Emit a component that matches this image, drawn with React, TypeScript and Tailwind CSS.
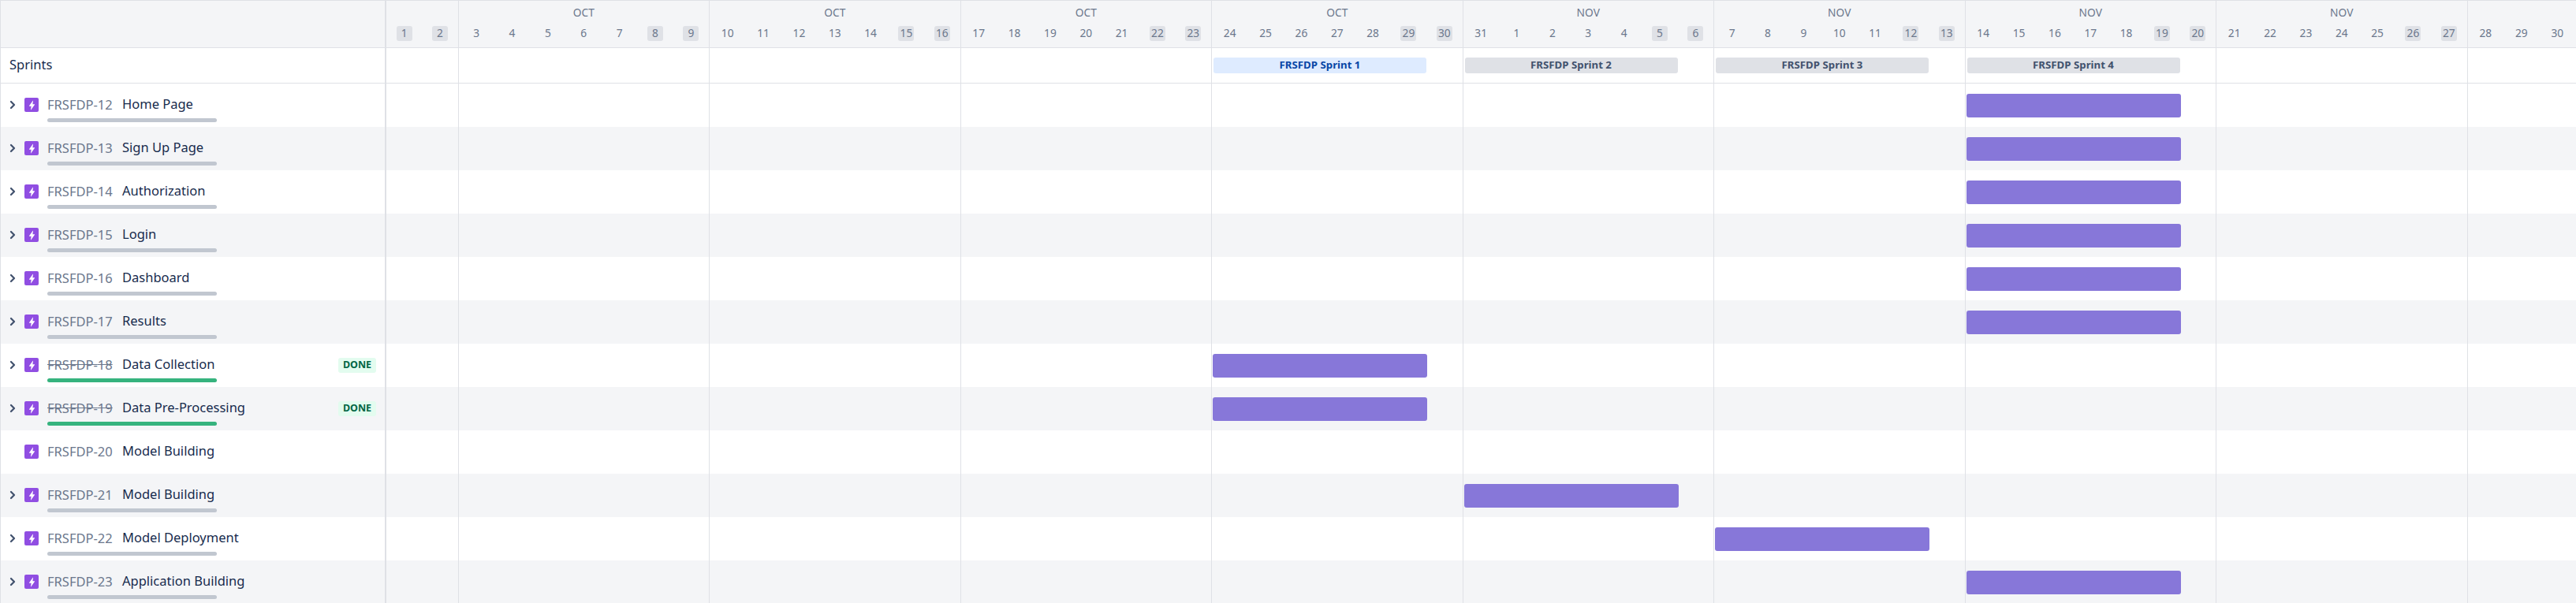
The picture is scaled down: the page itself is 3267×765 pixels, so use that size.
import React from 'react';
import { ChevronRight } from 'lucide-react';

type Week = { month?: string; days: number[] };

const weeks: Week[] = [
  { days: [1, 2] },
  { month: 'OCT', days: [3, 4, 5, 6, 7, 8, 9] },
  { month: 'OCT', days: [10, 11, 12, 13, 14, 15, 16] },
  { month: 'OCT', days: [17, 18, 19, 20, 21, 22, 23] },
  { month: 'OCT', days: [24, 25, 26, 27, 28, 29, 30] },
  { month: 'NOV', days: [31, 1, 2, 3, 4, 5, 6] },
  { month: 'NOV', days: [7, 8, 9, 10, 11, 12, 13] },
  { month: 'NOV', days: [14, 15, 16, 17, 18, 19, 20] },
  { month: 'NOV', days: [21, 22, 23, 24, 25, 26, 27] },
  { days: [28, 29, 30] },
];

type Issue = { id: number; title: string; week: number | null; done?: boolean; leaf?: boolean };

const issues: Issue[] = [
  { id: 12, title: 'Home Page', week: 7 },
  { id: 13, title: 'Sign Up Page', week: 7 },
  { id: 14, title: 'Authorization', week: 7 },
  { id: 15, title: 'Login', week: 7 },
  { id: 16, title: 'Dashboard', week: 7 },
  { id: 17, title: 'Results', week: 7 },
  { id: 18, title: 'Data Collection', week: 4, done: true },
  { id: 19, title: 'Data Pre-Processing', week: 4, done: true },
  { id: 20, title: 'Model Building', week: null, leaf: true },
  { id: 21, title: 'Model Building', week: 5 },
  { id: 22, title: 'Model Deployment', week: 6 },
  { id: 23, title: 'Application Building', week: 7 },
];

const sprints: Record<number, { name: string; active?: boolean }> = {
  4: { name: 'FRSFDP Sprint 1', active: true },
  5: { name: 'FRSFDP Sprint 2' },
  6: { name: 'FRSFDP Sprint 3' },
  7: { name: 'FRSFDP Sprint 4' },
};

const EpicIcon = () => (
  <span className="flex h-[18px] w-[18px] shrink-0 items-center justify-center rounded-[2px] bg-[#904ee2]">
    <svg width="15" height="15" viewBox="0 0 12 12" fill="#ffffff">
      <path d="M6.9 1.4 3.2 6.6c-.1.2 0 .4.2.4h1.9l-.5 3.5c0 .2.2.3.3.1l3.7-5.2c.1-.2 0-.4-.2-.4H6.7l.5-3.5c0-.2-.2-.2-.3-.1z" />
    </svg>
  </span>
);

const TimelineGrid: React.FC<{ render?: (index: number) => React.ReactNode }> = ({ render }) => (
  <div className="grid flex-1 grid-cols-[90.5px_repeat(8,318.5px)_1fr]">
    {weeks.map((_, i) => (
      <div key={i} className={`flex items-center ${i > 0 ? 'border-l border-[#dfe1e6]' : ''}`}>
        {render?.(i)}
      </div>
    ))}
  </div>
);

const HeaderRow = () => (
  <div className="flex h-[61px] border-b border-t border-[#dfe1e6] bg-[#f4f5f7]">
    <div className="w-[489px] shrink-0 border-r-2 border-[#dfe1e6]" />
    <div className="grid flex-1 grid-cols-[90.5px_repeat(8,318.5px)_1fr]">
      {weeks.map((week, i) => (
        <div key={i} className={`flex flex-col ${i > 0 ? 'border-l border-[#dfe1e6]' : ''}`}>
          <div className="h-[32px] pt-[5px] text-center text-[13.75px] leading-[20px] text-[#6b778c]">{week.month}</div>
          <div className="flex">
            {week.days.map((day, d) => {
              const weekend = i === 0 || (i < 9 && d >= 5);
              return (
                <div key={d} className="flex w-[45.5px] justify-center">
                  <span
                    className={`flex h-[19px] w-[20px] items-center justify-center rounded-[3px] text-[13.75px] text-[#6b778c] ${
                      weekend ? 'bg-[#dfe1e6]' : ''
                    }`}
                  >
                    {day}
                  </span>
                </div>
              );
            })}
          </div>
        </div>
      ))}
    </div>
  </div>
);

const SprintRow = () => (
  <div className="flex h-[45px] border-b border-[#dfe1e6] bg-white">
    <div className="flex w-[489px] shrink-0 items-center border-r-2 border-[#dfe1e6] pb-[2px] pl-[11px] text-[16.5px] text-[#172b4d]">
      Sprints
    </div>
    <TimelineGrid
      render={(i) =>
        sprints[i] ? (
          <div
            className={`ml-[2px] flex h-[20px] w-[270px] items-center justify-center rounded-[3px] text-[13.25px] font-bold ${
              sprints[i].active ? 'bg-[#deebff] text-[#0747a6]' : 'bg-[#dfe1e6] text-[#42526e]'
            }`}
          >
            {sprints[i].name}
          </div>
        ) : null
      }
    />
  </div>
);

const IssueRow: React.FC<{ issue: Issue; striped: boolean }> = ({ issue, striped }) => (
  <div className={`flex h-[55px] ${striped ? 'bg-[#f4f5f7]' : 'bg-white'}`}>
    <div className="w-[489px] shrink-0 border-r-2 border-[#dfe1e6] pt-[17px]">
      <div className="flex h-[20px] items-center pr-[11px]">
        <span className="flex w-[30px] shrink-0 justify-center pr-px">
          {!issue.leaf && <ChevronRight size={16} strokeWidth={3.4} className="text-[#42526e]" />}
        </span>
        <EpicIcon />
        <span className={`ml-[11px] w-[95px] shrink-0 text-[16.5px] text-[#6b778c] ${issue.done ? 'line-through' : ''}`}>
          FRSFDP-{issue.id}
        </span>
        <span className="mb-[2px] text-[16.5px] text-[#172b4d]">{issue.title}</span>
        {issue.done && (
          <span className="ml-auto flex h-[19px] w-[48px] items-center justify-center rounded-[3px] bg-[#e3fcef] text-[12.5px] font-bold text-[#006644]">
            DONE
          </span>
        )}
      </div>
      {!issue.leaf && (
        <div className={`ml-[59px] mt-[7px] h-[5px] w-[215px] rounded-[3px] ${issue.done ? 'bg-[#36b37e]' : 'bg-[#c1c7d0]'}`} />
      )}
    </div>
    <TimelineGrid
      render={(i) => (issue.week === i ? <div className="ml-px h-[30px] w-[272px] rounded-[3px] bg-[#8777d9]" /> : null)}
    />
  </div>
);

export default function App() {
  return (
    <div className="h-[765px] w-[3267px] overflow-hidden border-l border-[#dfe1e6] bg-white font-['Noto_Sans',sans-serif]">
      <HeaderRow />
      <SprintRow />
      {issues.map((issue, i) => (
        <IssueRow key={issue.id} issue={issue} striped={i % 2 === 1} />
      ))}
    </div>
  );
}
